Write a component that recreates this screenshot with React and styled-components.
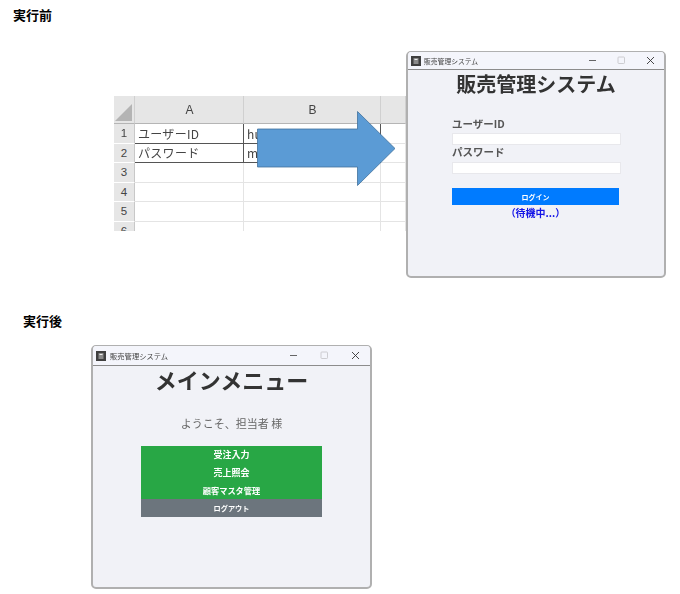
import React from 'react';
import styled, { createGlobalStyle } from 'styled-components';

const FONT = `"Noto Sans CJK JP", "Liberation Sans", sans-serif`;
const COL = [21, 109, 137, 25];
const ROWS = ['1', '2', '3', '4', '5', '6'];

const Global = createGlobalStyle`
  html, body { margin: 0; padding: 0; background: #fff; }
  body { font-family: ${FONT}; }
`;

const Canvas = styled.div`
  position: relative;
  width: 680px;
  height: 594px;
  overflow: hidden;
  background: #fff;
`;

const Caption = styled.div`
  position: absolute;
  left: ${p => p.$x}px;
  top: ${p => p.$y}px;
  font-size: 13px;
  line-height: 14px;
  font-weight: 700;
  color: #000;
`;

const Sheet = styled.div`
  position: absolute;
  left: 114px;
  top: 96px;
  width: 292px;
  height: 135px;
  overflow: hidden;
  display: grid;
  grid-template-columns: ${COL.map(c => `${c}px`).join(' ')};
  grid-template-rows: 28px repeat(6, 19.5px);
  font-size: 12px;
  color: #333;
  filter: blur(0.3px);
`;

const Corner = styled.div`
  background: #e6e6e6;
  border-right: 1px solid #d0d0d0;
  border-bottom: 1px solid #b5b5b5;
  display: flex;
  align-items: flex-end;
  justify-content: flex-end;
  padding: 0 2px 2px 0;
  box-sizing: border-box;
`;

const ColHead = styled.div`
  background: #e6e6e6;
  border-right: 1px solid #d0d0d0;
  border-bottom: 1px solid #b5b5b5;
  box-sizing: border-box;
  display: flex;
  align-items: center;
  justify-content: center;
  padding-left: 1px;
  font-family: "Liberation Sans", sans-serif;
  font-size: 12px;
  color: #444;
`;

const RowHead = styled.div`
  background: #e6e6e6;
  border-right: 1px solid #c8c8c8;
  border-bottom: 1px solid #fff;
  box-sizing: border-box;
  display: flex;
  align-items: center;
  justify-content: center;
  font-family: "Liberation Sans", sans-serif;
  font-size: 11.5px;
  color: #444;
`;

const Cell = styled.div`
  box-sizing: border-box;
  border-right: 1px solid ${p => (p.$strong ? '#555' : '#e4e4e4')};
  border-bottom: 1px solid ${p => (p.$strong ? '#555' : '#e4e4e4')};
  padding-left: 3px;
  display: flex;
  align-items: center;
  font-size: 12px;
  letter-spacing: 0.3px;
  white-space: nowrap;
  overflow: hidden;
  color: #444;
`;

const Arrow = styled.svg`
  position: absolute;
  left: 257px;
  top: 111px;
  width: 139px;
  height: 75px;
`;

const Window = styled.div`
  position: absolute;
  left: ${p => p.$x}px;
  top: ${p => p.$y}px;
  width: ${p => p.$w}px;
  height: ${p => p.$h}px;
  box-sizing: border-box;
  display: flex;
  flex-direction: column;
  background: #f1f2f7;
  border: 2px solid #b0b0b0;
  border-top-width: 1px;
  border-radius: 5px;
  overflow: hidden;
  filter: blur(0.35px);
`;

const TitleBar = styled.div`
  flex: none;
  height: ${p => p.$h}px;
  box-sizing: border-box;
  display: flex;
  align-items: center;
  gap: ${p => p.$gap}px;
  padding-left: 3px;
  background: #f4f5fb;
  border-bottom: 1px solid #8c8c8c;
`;

const AppIcon = styled.svg`
  width: 10px;
  height: 10px;
  flex: none;
`;

const BarTitle = styled.span`
  font-size: ${p => p.$size}px;
  line-height: 10px;
  color: #444;
  white-space: nowrap;
`;

const Controls = styled.div`
  margin-left: auto;
  display: flex;
  align-items: center;
  gap: ${p => p.$gap}px;
  padding-right: ${p => p.$pad}px;
`;

const Ctl = styled.svg`
  width: 9px;
  height: 9px;
  display: block;
`;

const Body = styled.div`
  flex: 1;
  display: flex;
  flex-direction: column;
`;

const Heading = styled.h1`
  margin: 0;
  text-align: center;
  font-weight: 700;
  color: #333;
  font-size: ${p => p.$size}px;
  line-height: ${p => p.$line}px;
`;

const LoginForm = styled.div`
  display: flex;
  flex-direction: column;
  margin: 19px 0 0 44px;
  width: 169px;
`;

const FieldLabel = styled.label`
  font-size: 10.5px;
  line-height: 14px;
  font-weight: 700;
  color: #555;
`;

const Field = styled.div`
  height: 12px;
  box-sizing: border-box;
  background: #fff;
  border: 1px solid #e8e8ec;
  margin-top: ${p => p.$top}px;
`;

const PrimaryButton = styled.div`
  margin-top: 14px;
  width: 167px;
  height: 17px;
  display: flex;
  align-items: center;
  justify-content: center;
  background: #007bff;
  color: #fff;
  font-size: 7px;
  font-weight: 700;
`;

const Status = styled.div`
  width: 167px;
  text-align: center;
  font-size: 10px;
  line-height: 15px;
  font-weight: 700;
  color: #1414e6;
`;

const Welcome = styled.div`
  text-align: center;
  margin-top: 23px;
  font-size: 11px;
  line-height: 16px;
  color: #666;
`;

const Menu = styled.div`
  display: flex;
  flex-direction: column;
  align-self: center;
  width: 181px;
  margin-top: 15px;
`;

const MenuButton = styled.div`
  height: 17.75px;
  display: flex;
  align-items: center;
  justify-content: center;
  background: ${p => (p.$muted ? '#6c757d' : '#28a745')};
  color: #fff;
  font-size: ${p => p.$size}px;
  font-weight: 700;
`;

const WinIcon = () => (
  <AppIcon viewBox="0 0 10 10">
    <rect width="10" height="10" fill="#3f3f3f" />
    <rect x="2.5" y="2" width="5" height="6" fill="#8a8a8a" />
    <rect x="3.5" y="3" width="3" height="1" fill="#eee" />
  </AppIcon>
);

const WinControls = ({ gap, pad }) => (
  <Controls $gap={gap} $pad={pad}>
    <Ctl viewBox="0 0 9 9">
      <path d="M1 4.5H8" stroke="#555" strokeWidth="0.9" />
    </Ctl>
    <Ctl viewBox="0 0 9 9">
      <rect x="1" y="1" width="6.5" height="6.5" rx="0.8" fill="none" stroke="#c8c8cc" strokeWidth="0.9" />
    </Ctl>
    <Ctl viewBox="0 0 9 9">
      <path d="M1 1L8 8M8 1L1 8" stroke="#333" strokeWidth="0.9" />
    </Ctl>
  </Controls>
);

export default function App() {
  return (
    <Canvas>
      <Global />
      <Caption $x={13} $y={8}>実行前</Caption>

      <Sheet>
        <Corner>
          <svg width="17" height="17" viewBox="0 0 17 17">
            <path d="M17 0V17H0Z" fill="#b4b4b4" />
          </svg>
        </Corner>
        <ColHead>A</ColHead>
        <ColHead>B</ColHead>
        <ColHead />
        {ROWS.map(r => (
          <React.Fragment key={r}>
            <RowHead>{r}</RowHead>
            <Cell $strong={r === '1' || r === '2'}>
              {r === '1' ? 'ユーザーID' : r === '2' ? 'パスワード' : ''}
            </Cell>
            <Cell $strong={r === '1' || r === '2'}>
              {r === '1' ? 'hu' : r === '2' ? 'm' : ''}
            </Cell>
            <Cell />
          </React.Fragment>
        ))}
      </Sheet>

      <Arrow viewBox="0 0 139 75">
        <path d="M0.5 18H100.5V0.5L138 37.5L100.5 74.5V56H0.5Z" fill="#5b9bd5" stroke="#41719c" strokeWidth="0.8" />
      </Arrow>

      <Window $x={406} $y={51} $w={260} $h={227}>
        <TitleBar $h={18} $gap={3}>
          <WinIcon />
          <BarTitle $size={6.8}>販売管理システム</BarTitle>
          <WinControls gap={20} pad={9} />
        </TitleBar>
        <Body>
          <Heading $size={20} $line={28}>販売管理システム</Heading>
          <LoginForm>
            <FieldLabel>ユーザーID</FieldLabel>
            <Field $top={2} />
            <FieldLabel>パスワード</FieldLabel>
            <Field $top={3} />
            <PrimaryButton>ログイン</PrimaryButton>
            <Status>（待機中...）</Status>
          </LoginForm>
        </Body>
      </Window>

      <Caption $x={23} $y={314}>実行後</Caption>

      <Window $x={91} $y={345} $w={281} $h={244}>
        <TitleBar $h={20} $gap={4}>
          <WinIcon />
          <BarTitle $size={7.3}>販売管理システム</BarTitle>
          <WinControls gap={22} pad={10} />
        </TitleBar>
        <Body>
          <Heading $size={22} $line={26}>メインメニュー</Heading>
          <Welcome>ようこそ、担当者 様</Welcome>
          <Menu>
            <MenuButton $size={9}>受注入力</MenuButton>
            <MenuButton $size={9}>売上照会</MenuButton>
            <MenuButton $size={8.2}>顧客マスタ管理</MenuButton>
            <MenuButton $muted $size={7.2}>ログアウト</MenuButton>
          </Menu>
        </Body>
      </Window>
    </Canvas>
  );
}
